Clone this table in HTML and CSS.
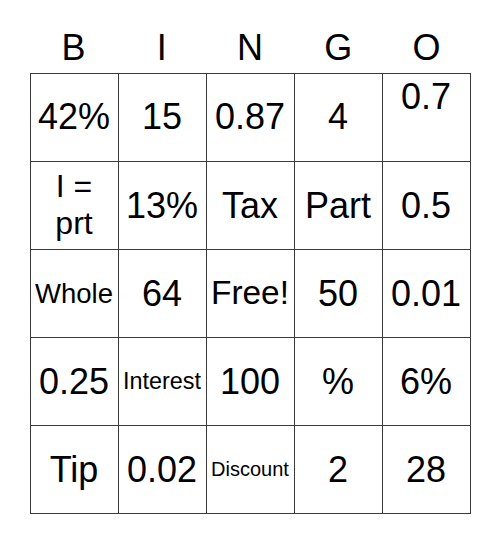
FILE: index.html
```html
<!DOCTYPE html>
<html>
<head>
<meta charset="utf-8">
<link rel="stylesheet" href="styles.css">
</head>
<body>
<div class="card">
  <div class="head">
    <div>B</div><div>I</div><div>N</div><div>G</div><div>O</div>
  </div>
  <div class="grid">
    <div class="cell">42%</div>
    <div class="cell">15</div>
    <div class="cell">0.87</div>
    <div class="cell">4</div>
    <div class="cell top">0.7</div>

    <div class="cell wrap">I = prt</div>
    <div class="cell">13%</div>
    <div class="cell">Tax</div>
    <div class="cell">Part</div>
    <div class="cell">0.5</div>

    <div class="cell whole">Whole</div>
    <div class="cell">64</div>
    <div class="cell free">Free!</div>
    <div class="cell">50</div>
    <div class="cell">0.01</div>

    <div class="cell">0.25</div>
    <div class="cell interest">Interest</div>
    <div class="cell">100</div>
    <div class="cell">%</div>
    <div class="cell">6%</div>

    <div class="cell">Tip</div>
    <div class="cell">0.02</div>
    <div class="cell discount">Discount</div>
    <div class="cell">2</div>
    <div class="cell">28</div>
  </div>
</div>
</body>
</html>
```

FILE: styles.css
```css
html, body {
  margin: 0;
  padding: 0;
  background: #fff;
}
body {
  font-family: "Liberation Sans", Arial, sans-serif;
  color: #000;
}
.card {
  width: 441px;
  margin: 0 auto;
}
.head {
  display: grid;
  grid-template-columns: repeat(5, 1fr);
  padding-top: 27px;
  height: 45.5px;
  font-size: 36px;
  line-height: 41.4px;
  text-align: center;
}
.grid {
  display: grid;
  grid-template-columns: repeat(5, 1fr);
  grid-auto-rows: 88.2px;
  border-top: 1px solid #3a3a3a;
  border-left: 1px solid #3a3a3a;
  box-sizing: border-box;
  width: 441px;
}
.cell {
  display: flex;
  align-items: center;
  justify-content: center;
  text-align: center;
  border-right: 1px solid #3a3a3a;
  border-bottom: 1px solid #3a3a3a;
  font-size: 36px;
  line-height: 1.15;
  overflow: hidden;
}
.top {
  padding-bottom: 41px;
}
.wrap {
  font-size: 32px;
  padding: 0 18px;
}
.whole { font-size: 27.5px; }
.free { font-size: 33.4px; }
.interest { font-size: 23.4px; }
.discount { font-size: 20px; }
```
